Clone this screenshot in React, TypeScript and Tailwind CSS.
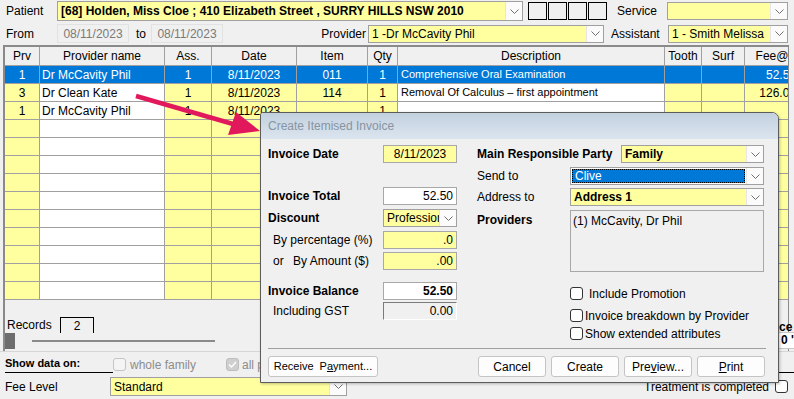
import React from 'react'

const Y = 'bg-[#ffffa0]'

function Chevron() {
  return (
    <svg width="9" height="5" viewBox="0 0 9 5" fill="none">
      <path d="M0.5 0.5 L4.5 4.5 L8.5 0.5" stroke="#6f6f6f" strokeWidth="1" />
    </svg>
  )
}

function Combo({
  text,
  className = '',
  bold = false,
  selected = false,
}: {
  text: string
  className?: string
  bold?: boolean
  selected?: boolean
}) {
  return (
    <div className={`flex shrink-0 border border-[#a0a0a0] ${selected ? 'bg-white' : Y} ${className}`}>
      <div className="flex min-w-0 flex-1 items-stretch overflow-hidden whitespace-nowrap p-[1px]">
        {selected ? (
          <div className="flex flex-1 items-center border border-dotted border-black bg-[#0078d7] pl-[2px] text-white">
            {text}
          </div>
        ) : (
          <div className={`flex flex-1 items-center pl-[2px] ${bold ? 'font-bold' : ''}`}>{text}</div>
        )}
      </div>
      <div className="flex w-[17px] shrink-0 items-center justify-center border-l border-[#e6e6e6] bg-[#fbfbfb]">
        <Chevron />
      </div>
    </div>
  )
}

function Field({ text, className = '' }: { text: string; className?: string }) {
  return (
    <div className={`flex h-[18px] w-[74px] shrink-0 items-center overflow-hidden whitespace-nowrap border ${className}`}>
      {text}
    </div>
  )
}

function Check({ className = '' }: { className?: string }) {
  return <div className={`h-[13px] w-[13px] shrink-0 rounded-[3px] border border-[#333] bg-white ${className}`} />
}

function Btn({ children, className = '' }: { children: React.ReactNode; className?: string }) {
  return (
    <div
      className={`flex h-[21px] shrink-0 items-center justify-center whitespace-nowrap rounded-[3px] border border-[#c4c4c4] bg-[#fdfdfd] ${className}`}
    >
      {children}
    </div>
  )
}

const COLS = [
  { w: 'w-[35px]', bg: Y, cls: 'justify-center' },
  { w: 'w-[125px]', bg: 'bg-white', cls: 'pl-[2px]' },
  { w: 'w-[47px]', bg: Y, cls: 'justify-center' },
  { w: 'w-[85px]', bg: Y, cls: 'justify-center' },
  { w: 'w-[71px]', bg: Y, cls: 'justify-center' },
  { w: 'w-[30px]', bg: Y, cls: 'justify-center' },
  { w: 'w-[267px]', bg: 'bg-white', cls: 'pl-[3px] text-[11px]' },
  { w: 'w-[37px]', bg: Y, cls: 'justify-center' },
  { w: 'w-[43px]', bg: Y, cls: 'justify-center' },
  { w: 'w-[55px]', bg: Y, cls: 'justify-end pr-[3px]' },
]

const HEAD = ['Prv', 'Provider name', 'Ass.', 'Date', 'Item', 'Qty', 'Description', 'Tooth', 'Surf', 'Fee@']

const ROWS: string[][] = [
  ['1', 'Dr McCavity Phil', '1', '8/11/2023', '011', '1', 'Comprehensive Oral Examination', '', '', '52.50'],
  ['3', 'Dr Clean Kate', '1', '8/11/2023', '114', '1', 'Removal Of Calculus – first appointment', '', '', '126.00'],
  ['1', 'Dr McCavity Phil', '1', '8/11/2023', '', '1', '', '', '', ''],
  ...Array.from({ length: 10 }, () => Array(10).fill('')),
]

export default function App() {
  return (
    <div className="relative h-[399px] w-[794px] overflow-hidden bg-[#f0f0f0] font-['Liberation_Sans',Arial,sans-serif] text-[12px] text-black">
      {/* patient row */}
      <div className="mt-[1px] flex h-[20px] items-center pl-[6px]">
        <div className="w-[51px]">Patient</div>
        <Combo
          className="h-[20px] w-[466px]"
          bold
          text="[68] Holden, Miss Cloe ; 410 Elizabeth Street , SURRY HILLS NSW 2010"
        />
        <div className="ml-[5px] flex h-[18px] gap-[1px]">
          {[0, 1, 2, 3].map((i) => (
            <div key={i} className="w-[19px] border border-black bg-[#f0f0f0]" />
          ))}
        </div>
        <div className="ml-[10px] w-[50px]">Service</div>
        <Combo className="h-[18px] w-[121px]" text="" />
      </div>

      {/* from / provider row */}
      <div className="mt-[3px] flex h-[19px] items-center pl-[6px]">
        <div className="w-[51px]">From</div>
        <div className="flex h-[19px] w-[72px] items-center justify-center border border-[#e2e2e2] text-[#7a7a7a]">
          08/11/2023
        </div>
        <div className="ml-[7px] w-[15px]">to</div>
        <div className="flex h-[19px] w-[72px] items-center justify-center border border-[#e2e2e2] text-[#7a7a7a]">
          08/11/2023
        </div>
        <div className="w-[145px] pr-[2px] text-right">Provider</div>
        <Combo className="h-[18px] w-[236px]" text="1 -Dr McCavity Phil" />
        <div className="ml-[7px] w-[57px]">Assistant</div>
        <Combo className="h-[18px] w-[120px]" text="1 - Smith Melissa" />
      </div>

      {/* grid */}
      <div className="ml-[3px] mt-[2px] h-[306px] w-[786px] overflow-hidden border-l-2 border-r border-t-2 border-[#8a8a8a]">
        <div className="flex h-[19px]">
          {HEAD.map((h, i) => (
            <div
              key={h}
              className={`flex shrink-0 items-center justify-center border-b border-r border-[#a0a0a0] bg-[#f0f0f0] ${COLS[i].w}`}
            >
              {h}
            </div>
          ))}
        </div>
        {ROWS.map((r, ri) => (
          <div key={ri} className="flex h-[18px]">
            {r.map((c, ci) => (
              <div
                key={ci}
                className={`flex shrink-0 items-center overflow-hidden whitespace-nowrap border-b border-r border-[#a0a0a0] ${COLS[ci].w} ${COLS[ci].cls} ${
                  ri === 0 ? 'bg-[#0078d7] text-white' : COLS[ci].bg
                }`}
              >
                {c}
              </div>
            ))}
          </div>
        ))}
        <div className="mt-[17px] flex h-[16px] items-center">
          <div className="w-[55px] pl-[2px]">Records</div>
          <div className="flex h-[16px] w-[34px] items-center justify-center border-l border-r border-t border-black">2</div>
        </div>
        <div className="flex h-[16px] items-center">
          <div className="h-[16px] w-[10px] bg-[#6d6d6d]" />
          <div className="ml-[17px] h-[2px] w-[183px] bg-[#8a8a8a]" />
        </div>
      </div>
      <div className="h-px bg-[#d6d6d6]" />

      {/* show data on */}
      <div className="flex h-[21px]">
        <div className="ml-[5px] w-[108px] border-b border-black pt-[3px] text-[11px] font-bold">Show data on:</div>
        <div className="flex items-center pt-[4px] text-[#8c8c8c]">
          <div className="h-[13px] w-[13px] rounded-[3px] border border-[#c4c4c4] bg-[#f4f4f4]" />
          <span className="ml-[4px]">whole family</span>
          <div className="ml-[30px] flex h-[13px] w-[13px] items-center justify-center rounded-[3px] border border-[#bdbdbd] bg-[#cfcfcf]">
            <svg width="9" height="7" viewBox="0 0 9 7" fill="none">
              <path d="M1 3.5 L3.5 6 L8 1" stroke="white" strokeWidth="1.3" />
            </svg>
          </div>
          <span className="ml-[3px]">all providers</span>
        </div>
      </div>

      {/* fee level */}
      <div className="mt-[4px] flex h-[19px] items-center">
        <div className="ml-[5px] w-[105px]">Fee Level</div>
        <Combo className="h-[19px] w-[237px]" text="Standard" />
        <div className="ml-auto flex items-center">
          <span>Treatment is completed</span>
          <Check className="ml-[6px] mr-[6px]" />
        </div>
      </div>

      {/* partially hidden fields right of the dialog */}
      <div className="absolute left-[779px] top-[318px] text-[12px] font-bold">ce</div>
      <div className="absolute left-[778px] top-[332px] h-[17px] w-[20px] border border-[#c8c8c8] bg-white pl-[2px] text-[12px] font-bold leading-[15px]">
        0 '
      </div>
      <div className="absolute left-[776px] top-[372px] h-px w-[18px] bg-black" />

      {/* annotation arrow */}
      <svg className="pointer-events-none absolute left-0 top-0" width="794" height="399">
        <line x1="136" y1="96" x2="233" y2="124" stroke="#e2185c" strokeWidth="4.5" />
        <polygon points="260,131 228,135 236,112" fill="#e2185c" />
      </svg>

      {/* dialog */}
      <div className="absolute left-[260px] top-[112px] flex h-[271px] w-[519px] flex-col overflow-hidden rounded-tl-[3px] rounded-tr-[7px] border border-[#5c5c5c] bg-[#f0f0f0] shadow-[1px_1px_3px_rgba(0,0,0,0.25)]">
        <div className="flex h-[26px] shrink-0 items-center bg-gradient-to-b from-[#c3d1df] to-[#dbe5ef] pl-[7px] text-[#8794a3]">
          Create Itemised Invoice
        </div>
        <div className="flex flex-1 flex-col pl-[7px] pt-[6px]">
          <div className="flex">
            {/* left column */}
            <div className="flex w-[189px] flex-col">
              <div className="flex h-[18px] items-center">
                <div className="w-[115px] font-bold">Invoice Date</div>
                <Field text="8/11/2023" className={`justify-center border-[#a8a8a8] ${Y}`} />
              </div>
              <div className="mt-[24px] flex h-[18px] items-center">
                <div className="w-[115px] font-bold">Invoice Total</div>
                <Field text="52.50" className="justify-end border-[#a8a8a8] bg-white pr-[3px]" />
              </div>
              <div className="mt-[4px] flex h-[18px] items-center">
                <div className="w-[115px] font-bold">Discount</div>
                <Combo className="h-[18px] w-[74px]" text="Professional" />
              </div>
              <div className="mt-[4px] flex h-[18px] items-center">
                <div className="w-[115px] pl-[5px]">By percentage (%)</div>
                <Field text=".0" className={`justify-end border-[#a8a8a8] pr-[3px] ${Y}`} />
              </div>
              <div className="mt-[3px] flex h-[18px] items-center">
                <div className="flex w-[115px] pl-[5px]">
                  <span className="w-[20px]">or</span>
                  <span>By Amount ($)</span>
                </div>
                <Field text=".00" className={`justify-end border-[#a8a8a8] pr-[3px] ${Y}`} />
              </div>
              <div className="mt-[12px] flex h-[18px] items-center">
                <div className="w-[115px] font-bold">Invoice Balance</div>
                <Field text="52.50" className="justify-end border-[#a8a8a8] bg-white pr-[3px] font-bold" />
              </div>
              <div className="mt-[2px] flex h-[18px] items-center">
                <div className="w-[115px] pl-[5px]">Including GST</div>
                <Field
                  text="0.00"
                  className="justify-end border-b-white border-l-[#7a7a7a] border-r-white border-t-[#7a7a7a] bg-[#f0f0f0] pr-[3px]"
                />
              </div>
            </div>

            {/* right column */}
            <div className="ml-[20px] flex w-[287px] flex-col">
              <div className="flex h-[18px] items-center">
                <div className="w-[144px] font-bold">Main Responsible Party</div>
                <Combo className="h-[18px] w-[143px]" bold text="Family" />
              </div>
              <div className="mt-[4px] flex h-[18px] items-center">
                <div className="w-[93px]">Send to</div>
                <Combo className="h-[18px] w-[194px]" selected text="Clive" />
              </div>
              <div className="mt-[3px] flex h-[18px] items-center">
                <div className="w-[93px]">Address to</div>
                <Combo className="h-[18px] w-[194px]" bold text="Address 1" />
              </div>
              <div className="mt-[4px] flex">
                <div className="w-[93px] pt-[1px] font-bold">Providers</div>
                <div className="h-[62px] w-[194px] border border-[#a8a8a8] bg-[#f0f0f0] pl-[2px] pt-[1px]">
                  (1) McCavity, Dr Phil
                </div>
              </div>
              <div className="mt-[15px] flex h-[13px] items-center pl-[93px]">
                <Check />
                <span className="ml-[6px]">Include Promotion</span>
              </div>
              <div className="mt-[9px] flex h-[13px] items-center pl-[93px]">
                <Check />
                <span className="ml-[2px]">Invoice breakdown by Provider</span>
              </div>
              <div className="mt-[5px] flex h-[13px] items-center pl-[93px]">
                <Check />
                <span className="ml-[2px]">Show extended attributes</span>
              </div>
            </div>
          </div>

          <div className="mr-[12px] mt-[8px] h-px bg-[#a0a0a0]" />

          <div className="mt-[7px] flex">
            <Btn className="w-[110px] text-[11px]">
              <span>
                Receive&nbsp;&nbsp;P<span className="underline">a</span>yment...
              </span>
            </Btn>
            <Btn className="ml-[100px] w-[68px]">Cancel</Btn>
            <Btn className="ml-[5px] w-[68px]">Create</Btn>
            <Btn className="ml-[5px] w-[68px]">
              <span>
                Pre<span className="underline">v</span>iew...
              </span>
            </Btn>
            <Btn className="ml-[5px] w-[68px]">
              <span>
                <span className="underline">P</span>rint
              </span>
            </Btn>
          </div>
        </div>
      </div>
    </div>
  )
}
